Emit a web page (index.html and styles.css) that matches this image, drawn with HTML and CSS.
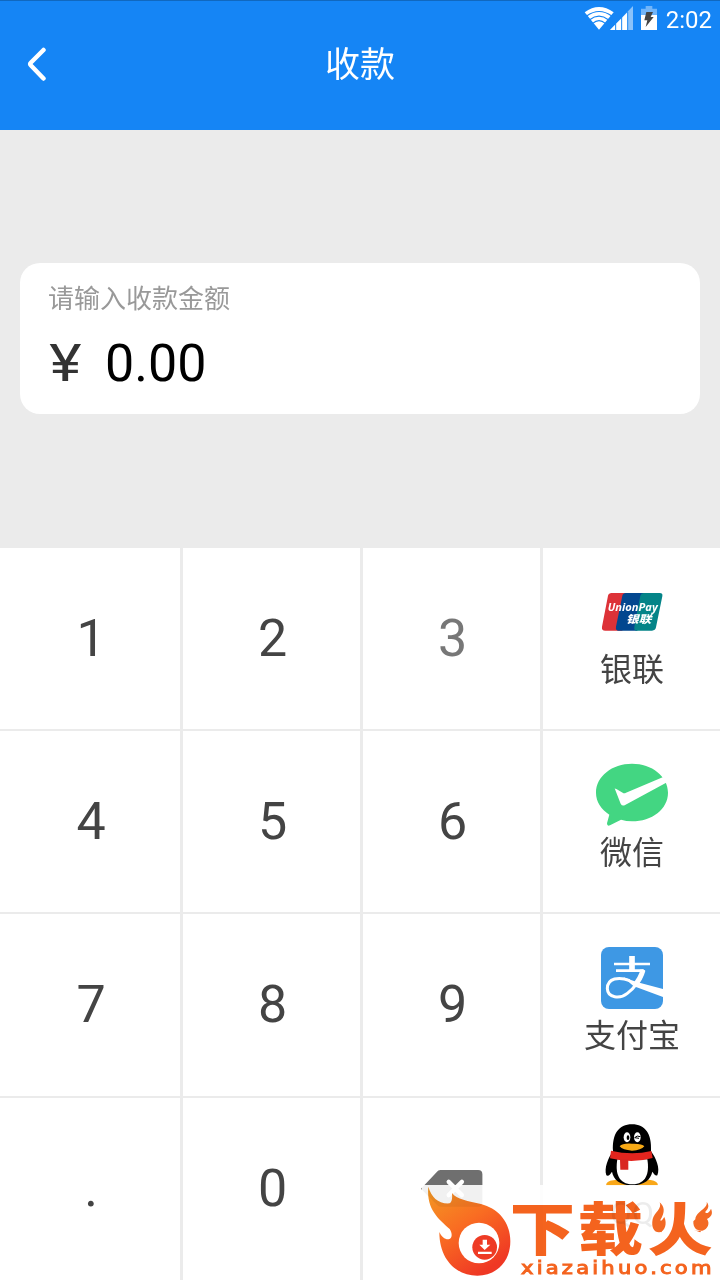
FILE: index.html
```html
<!DOCTYPE html>
<html lang="zh-CN">
<head>
    <meta charset="UTF-8">
    <meta name="viewport" content="width=device-width, initial-scale=1.0">
    <title>收款</title>
    <link rel="stylesheet" href="styles.css">
</head>
<body>
    <header class="header">
        <div class="status-bar">
            <svg class="status-icons" viewBox="0 0 225 120" width="75" height="40">
                <path d="M14 37Q57 5 101 37L57 89Z" fill="#fff"/>
                <path d="M20 48Q57 21 95 48M29 59Q57 38 85 59M38 70Q57 54 76 70" fill="none" stroke="#1585f5" stroke-width="3.5"/>
                <path d="M90 90L159 18V90Z" fill="#8ac2fa"/>
                <path d="M90 90L144 35V90Z" fill="#fff"/>
                <path d="M107 70V90M125 50V90M143 35V90" stroke="#1585f5" stroke-width="3"/>
                <path d="M183 26H197V18H217V26H231V45H183Z" fill="#72b5f9"/>
                <path d="M183 45H231V90H183Z" fill="#fff"/>
                <path d="M199 36L219 36L212 51H221L197 81L202 61H193Z" fill="#444"/>
            </svg>
            <span class="time">2:02</span>
        </div>
        <div class="nav">
            <svg class="back" viewBox="0 0 20 36" width="20" height="36">
                <path d="M16.500 4L4 16.500Q2.500 18 4 19.500L16.500 32.500" fill="none" stroke="#fff" stroke-width="4.500" stroke-linecap="round"/>
            </svg>
            <h1>收款</h1>
        </div>
    </header>

    <main class="amount-area">
        <div class="amount-card">
            <div class="hint">请输入收款金额</div>
            <div class="amount"><span class="yen">¥</span><span>0.00</span></div>
        </div>
    </main>

    <div class="keypad">
        <div class="key">1</div>
        <div class="key">2</div>
        <div class="key pressed">3</div>
        <div class="key pay">
            <svg viewBox="0 0 216 216" width="72" height="72">
                <g transform="translate(11 -1)">
                    <path d="M32 52H90L68 165H17Q5 165 7 153L25 60Q27 52 36 52Z" fill="#dd3238"/>
                    <path d="M77 52H137L113 165H57Q47 165 49 153L68 60Q70 52 79 52Z" fill="#02478f"/>
                    <path d="M132 52H180Q190 52 188 62L169 155Q167 165 157 165H111Q102 165 104 153L122 60Q124 52 132 52Z" fill="#048488"/>
                    <text class="union-en" x="24" y="107" textLength="150" lengthAdjust="spacingAndGlyphs">UnionPay</text>
                    <text class="union-cn" x="79" y="141" textLength="76" lengthAdjust="spacingAndGlyphs">银联</text>
                </g>
            </svg>
            <span>银联</span>
        </div>

        <div class="key">4</div>
        <div class="key">5</div>
        <div class="key">6</div>
        <div class="key pay">
            <svg viewBox="0 0 216 216" width="72" height="72">
                <path d="M108 14C168 14 216 52 216 101C216 150 168 187 108 187Q91 187 75 182L42 199Q33 203 33 193L40 167C15 150 0 128 0 101C0 52 48 14 108 14Z" fill="#43d682"/>
                <path d="M57 91Q54 86 61 90L80 101Q84 104 90 101L207 52L218 67L86 139Q78 142 74 134Z" fill="#fff"/>
            </svg>
            <span>微信</span>
        </div>

        <div class="key">7</div>
        <div class="key">8</div>
        <div class="key">9</div>
        <div class="key pay">
            <svg viewBox="0 0 216 216" width="72" height="72">
                <rect x="15" y="15" width="186" height="186" rx="24" fill="#3e98e4"/>
                <g fill="none" stroke="#fff">
                    <path d="M54 66H162M60 86H143" stroke-width="8"/>
                    <path d="M108 42V86" stroke-width="17"/>
                    <path d="M143 83Q128 128 94 154C72 172 35 168 34 140C34 108 69 103 101 116" stroke-width="9"/>
                    <path d="M141 84Q134 110 115 131" stroke-width="15"/>
                </g>
                <path d="M82 106L122 120L201 141V165L112 132Z" fill="#fff"/>
            </svg>
            <span>支付宝</span>
        </div>

        <div class="key">.</div>
        <div class="key">0</div>
        <div class="key">
            <svg class="delete" viewBox="0 0 186 112" width="62" height="37">
                <path d="M2 54L47 6Q51 0 58 0H172Q185 0 185 13V98Q185 111 172 111H58Q51 111 47 105L2 60Q-2 57 2 54Z" fill="#6f6f6f"/>
                <path d="M83 36L123 76M123 36L83 76" stroke="#fff" stroke-width="13" stroke-linecap="round"/>
            </svg>
        </div>
        <div class="key pay qq">
            <svg viewBox="0 0 216 216" width="72" height="72">
                <path d="M52 193Q30 195 30 209H95L76 190ZM142 190L123 209H186Q186 195 164 192Z" fill="#f9a718"/>
                <path d="M51 106C48 54 68 25 108 25C148 25 168 54 165 106C180 126 193 157 184 178C179 182 172 171 169 167C164 190 146 208 108 208C71 208 52 190 48 167C44 173 37 183 31 178C24 157 36 126 51 106Z" fill="#000"/>
                <path d="M64 130H154C161 173 150 205 109 205C68 205 57 173 64 130Z" fill="#fff"/>
                <path d="M45 104Q108 119 166 105L170 126Q110 143 42 127Z" fill="#e3251e"/>
                <path d="M72 130H97V161H73Z" fill="#d92722"/>
                <ellipse cx="93" cy="64" rx="10" ry="15" fill="#fff"/>
                <ellipse cx="124" cy="64" rx="10" ry="15" fill="#fff"/>
                <ellipse cx="96" cy="65" rx="4" ry="7" fill="#000"/>
                <path d="M116 65Q123 57 133 62M116 65L129 67" fill="none" stroke="#000" stroke-width="3"/>
                <path d="M71 91Q79 81 108 83Q139 82 145 91Q136 103 108 104Q80 102 71 91Z" fill="#f8aa16"/>
            </svg>
            <span>QQ</span>
        </div>
    </div>

    <div class="watermark">
        <svg viewBox="36 75 894 285" width="298" height="95">
            <defs>
                <linearGradient id="flame" x1="0" y1="0" x2="0.6" y2="1">
                    <stop offset="0" stop-color="#f39a23"/>
                    <stop offset="0.5" stop-color="#f96c22"/>
                    <stop offset="1" stop-color="#ef3824"/>
                </linearGradient>
            </defs>
            <path d="M55 80C65 112 84 132 119 130C127 125 127 111 126 99C139 119 176 123 213 132C267 146 301 188 301 244C301 306 258 347 202 347C139 347 88 299 88 216C94 230 105 239 116 238C128 234 127 220 119 207C91 180 48 151 55 80Z" fill="url(#flame)"/>
            <circle cx="207" cy="249" r="61" fill="#fff"/>
            <circle cx="224" cy="262" r="37" fill="#ee3b25"/>
            <path d="M218 239H231V254H241L224 270L208 254H218ZM204 275H245V282H204Z" fill="#fff"/>
            <g fill="#f4631e">
                <text class="brand" transform="translate(299 271) scale(.96 .84)" x="0 213 431" y="0">下载火</text>
                <text class="domain" transform="translate(333 342) scale(1.15 1)" x="0" y="0" textLength="497">xiazaihuo.com</text>
            </g>
            <!-- flames in place of the side strokes of 火 -->
            <path d="M717 120H789V186L778 212H717ZM839 120H912V212H842Z" fill="#fff"/>
            <path d="M749 127C757 147 733 158 728 177C723 203 733 218 748 217C765 214 772 191 763 171C757 180 752 185 751 180C766 157 764 140 749 127ZM890 126C895 146 858 153 856 178L850 184C849 205 861 213 877 212C893 208 901 190 891 177C911 166 906 154 903 146C899 158 886 164 886 155C895 146 899 137 890 126Z" fill="#f36a24"/>
        </svg>
    </div>
</body>
</html>
```
FILE: styles.css
```css
* {
    box-sizing: border-box;
}

body {
    margin: 0;
    width: 720px;
    height: 1280px;
    overflow: hidden;
    position: relative;
    display: flex;
    flex-direction: column;
    font-family: Roboto, "Noto Sans CJK SC", sans-serif;
    background: #ebebeb;
    color: #444;
}

.header {
    height: 130px;
    background: #1585f5;
    border-top: 1px solid #1068bf;
    color: #fff;
}

.status-bar {
    height: 39px;
    display: flex;
    justify-content: flex-end;
    padding-right: 8px;
}

.status-icons {
    margin-top: -1px;
    margin-right: 11px;
    overflow: visible;
}

.time {
    font-size: 24px;
    line-height: 38px;
}

.nav {
    height: 50px;
    display: grid;
    grid-template-columns: 100px 1fr 100px;
    align-items: center;
}

.back {
    margin-left: 27px;
    margin-bottom: 3px;
}

h1 {
    margin: 0;
    padding-top: 2px;
    text-align: center;
    font-size: 35px;
    font-weight: 400;
    line-height: 48px;
}

.amount-area {
    height: 418px;
    padding: 133px 20px 0;
}

.amount-card {
    height: 151px;
    padding: 19px 28px;
    background: #fff;
    border-radius: 20px;
}

.hint {
    font-size: 26px;
    line-height: 34px;
    color: #999;
}

.amount {
    display: flex;
    margin-top: 17px;
    font-size: 52px;
    line-height: 62px;
    color: #000;
}

.yen {
    width: 29px;
    margin-right: 28px;
    padding-left: 1px;
    color: #333;
    transform: scaleX(1.18);
    transform-origin: left;
}

.keypad {
    flex: none;
    display: grid;
    grid-template-columns: 180px 177px 177px 177px;
    grid-template-rows: 181px 181px 182px 182px;
    gap: 2px 3px;
    background: #ebebeb;
}

.key {
    display: flex;
    align-items: center;
    justify-content: center;
    padding: 0 0 1px 2px;
    background: #fff;
    font-size: 52px;
}

.key.pressed {
    color: #777;
}

.key.pay {
    flex-direction: column;
    justify-content: flex-start;
    padding-top: 28px;
    padding-left: 1px;
    font-size: 32px;
    line-height: 44px;
}

.key.qq {
    padding-top: 18px;
}

.key.qq span {
    margin-top: 3px;
}

.union-en {
    font: italic 700 34px "Open Sans", sans-serif;
    fill: #fff;
}

.union-cn {
    font: italic 900 32px "Noto Sans CJK SC", sans-serif;
    fill: #fff;
}

.delete {
    margin-left: -1px;
}

.watermark {
    position: absolute;
    left: 422px;
    top: 1185px;
    width: 298px;
    height: 95px;
    background: rgba(255, 255, 255, 0.9);
}

.watermark svg {
    display: block;
    mix-blend-mode: multiply;
}

.brand {
    font: 900 204px "Noto Sans CJK SC", sans-serif;
}

.domain {
    font: 500 55px "DejaVu Sans", sans-serif;
    stroke: #f4631e;
    stroke-width: 3;
}
```
